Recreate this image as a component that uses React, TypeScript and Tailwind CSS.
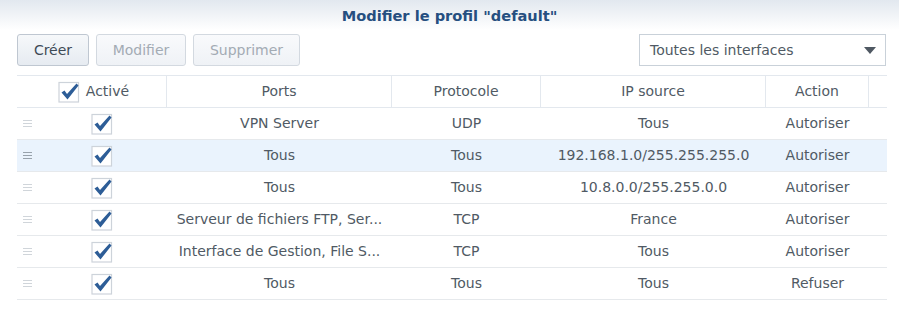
import React from 'react'

const rows = [
  { ports: 'VPN Server', proto: 'UDP', ip: 'Tous', action: 'Autoriser' },
  { ports: 'Tous', proto: 'Tous', ip: '192.168.1.0/255.255.255.0', action: 'Autoriser', selected: true },
  { ports: 'Tous', proto: 'Tous', ip: '10.8.0.0/255.255.0.0', action: 'Autoriser' },
  { ports: 'Serveur de fichiers FTP, Ser...', proto: 'TCP', ip: 'France', action: 'Autoriser' },
  { ports: 'Interface de Gestion, File S...', proto: 'TCP', ip: 'Tous', action: 'Autoriser' },
  { ports: 'Tous', proto: 'Tous', ip: 'Tous', action: 'Refuser' },
]

function Check() {
  return (
    <svg width="22" height="22" viewBox="0 0 22 22" className="block">
      <rect x="1" y="1.5" width="19.5" height="19.5" fill="#fff" stroke="#cdd3da" strokeWidth="1.2" />
      <path d="M3.5 11.5 L6.5 9.5 L9 13 L18.5 2.5 L20.5 4.5 L9.5 18.5 Z" fill="#2d5d97" />
    </svg>
  )
}

function Handle({ dark }: { dark?: boolean }) {
  const c = dark ? 'bg-[#98a2ac]' : 'bg-[#d0d5da]'
  return (
    <div className="flex flex-col gap-[2px] w-[9px]">
      <div className={`h-px ${c}`} />
      <div className={`h-px ${c}`} />
      <div className={`h-px ${c}`} />
    </div>
  )
}

export default function App() {
  return (
    <div className="w-[899px] h-[329px] bg-white font-['DejaVu_Sans',sans-serif] text-[14px] text-[#505a64]">
      <div className="h-[30px] bg-gradient-to-b from-[#e2e8ef] to-white flex items-center justify-center">
        <h1 className="text-[14.6px] font-bold text-[#264f80] pt-[1px]">Modifier le profil "default"</h1>
      </div>

      <div className="flex items-center px-[17px] pt-[4px] h-[36px]">
        <button className="h-[32px] w-[72px] rounded-[3px] border border-[#bfc7d1] bg-gradient-to-b from-[#f6f8fa] to-[#e6ebf1] text-[#3e4a56]">
          Créer
        </button>
        <button className="ml-[7px] h-[32px] w-[90px] rounded-[3px] border border-[#d3d9e0] bg-gradient-to-b from-[#f9fafc] to-[#eff2f6] text-[#a3abb4]">
          Modifier
        </button>
        <button className="ml-[7px] h-[32px] w-[107px] rounded-[3px] border border-[#d3d9e0] bg-gradient-to-b from-[#f9fafc] to-[#eff2f6] text-[#a3abb4]">
          Supprimer
        </button>
        <div className="ml-auto mr-[-4px] h-[32px] w-[247px] border border-[#c9d1d9] bg-white flex items-center justify-between pl-[10px] pr-[9px]">
          <span>Toutes les interfaces</span>
          <svg width="12" height="7" viewBox="0 0 12 7">
            <path d="M0 0 H12 L6 7 Z" fill="#4f5862" />
          </svg>
        </div>
      </div>

      <div className="mx-[17px] mt-[9px] w-[870px]">
        <div className="flex h-[33px] border-t border-b border-[#e3e8ee] items-center">
          <div className="w-[150px] h-full flex items-center justify-center gap-[6px] border-r border-[#e3e8ee] pl-[4px]">
            <Check />
            <span>Activé</span>
          </div>
          <div className="w-[225px] h-full flex items-center justify-center border-r border-[#e3e8ee]">Ports</div>
          <div className="w-[149px] h-full flex items-center justify-center border-r border-[#e3e8ee]">Protocole</div>
          <div className="w-[225px] h-full flex items-center justify-center border-r border-[#e3e8ee]">IP source</div>
          <div className="w-[103px] h-full flex items-center justify-center border-r border-[#e3e8ee]">Action</div>
          <div className="flex-1" />
        </div>
        {rows.map((r, i) => (
          <div
            key={i}
            className={`flex h-[32px] items-center border-b border-[#e6e9ec] ${r.selected ? 'bg-[#eaf3fd]' : ''}`}
          >
            <div className="w-[18px] flex justify-center pl-[3px]">
              <Handle dark={r.selected} />
            </div>
            <div className="w-[132px] flex justify-center pl-[2px]">
              <Check />
            </div>
            <div className="w-[225px] text-center">{r.ports}</div>
            <div className="w-[149px] text-center">{r.proto}</div>
            <div className="w-[225px] text-center">{r.ip}</div>
            <div className="w-[103px] text-center">{r.action}</div>
            <div className="flex-1" />
          </div>
        ))}
      </div>
    </div>
  )
}
